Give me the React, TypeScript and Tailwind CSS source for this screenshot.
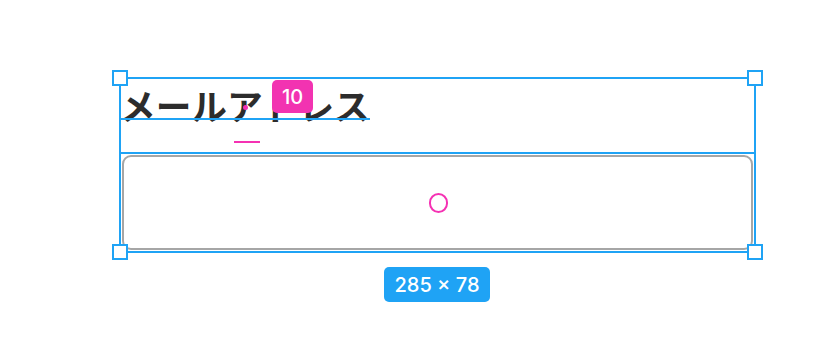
export default function App() {
  const blue = "bg-[#1fa3f5]";
  return (
    <div className="w-[816px] h-[354px] bg-white relative overflow-hidden">
      <div className="pt-[78px] pl-[120px]">
        {/* selected component: label + input */}
        <div className="relative w-[635px] h-[174px] flex flex-col gap-[22px]">
          <div className="h-[53px] leading-[53px] text-[35.7px] font-bold text-[#2c2c2c] whitespace-nowrap [font-family:'Noto_Sans_CJK_JP','Noto_Sans',sans-serif]">
            メールアドレス
          </div>
          <div className="h-[99px] p-[2px]">
            <div className="h-full rounded-[9px] border-2 border-[#a6a6a6] bg-white" />
          </div>

          {/* overlays */}
          <div className="absolute -left-[1px] -top-[1px] -right-[1px] -bottom-[1px] border-2 border-[#1fa3f5] pointer-events-none" />
          <div className={`absolute left-0 right-0 top-[74px] h-[2px] ${blue}`} />
          <div className={`absolute left-0 w-[250px] top-[40px] h-[2px] ${blue}`} />
          <div className="absolute left-[123px] top-[27px] w-[5px] h-[5px] rounded-full bg-[#f531b3]" />
          <div className="absolute left-[114px] top-[63px] w-[26px] h-[2px] bg-[#f531b3]" />
          <div className="absolute left-[152px] top-[2px] w-[41px] h-[33px] rounded-[5px] bg-[#f233b1] flex items-center justify-center text-white text-[20px] font-medium [font-family:Inter,sans-serif]">
            10
          </div>
          <div className="absolute left-[309px] top-[115px] w-[19px] h-[20px] rounded-full border-2 border-[#f531b3]" />

          {/* handles */}
          <div className="absolute -left-[8px] -top-[8px] w-[16px] h-[16px] bg-white border-2 border-[#1fa3f5]" />
          <div className="absolute -right-[8px] -top-[8px] w-[16px] h-[16px] bg-white border-2 border-[#1fa3f5]" />
          <div className="absolute -left-[8px] -bottom-[8px] w-[16px] h-[16px] bg-white border-2 border-[#1fa3f5]" />
          <div className="absolute -right-[8px] -bottom-[8px] w-[16px] h-[16px] bg-white border-2 border-[#1fa3f5]" />

          {/* size label */}
          <div className="absolute left-[264px] top-[189px] w-[106px] h-[35px] rounded-[5px] bg-[#1fa3f5] flex items-center justify-center text-white text-[20px] font-medium [font-family:Inter,sans-serif]">
            285 × 78
          </div>
        </div>
      </div>
    </div>
  );
}
